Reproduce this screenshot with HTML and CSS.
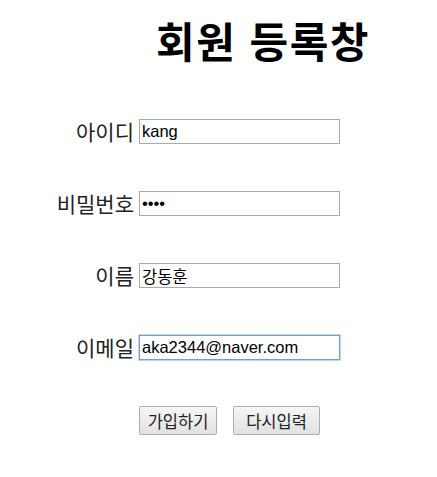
FILE: index.html
```html
<!DOCTYPE html>
<html lang="ko">
<head>
<meta charset="utf-8">
<title>회원 등록창</title>
<link rel="stylesheet" href="styles.css">
</head>
<body>
<h1 class="title">회원 등록창</h1>
<form class="form">
  <label class="label" for="uid">아이디</label>
  <input class="field" id="uid" type="text" value="kang">
  <label class="label" for="pw">비밀번호</label>
  <input class="field" id="pw" type="password" value="1234">
  <label class="label" for="name">이름</label>
  <input class="field" id="name" type="text" value="강동훈">
  <label class="label" for="mail">이메일</label>
  <input class="field focused" id="mail" type="text" value="aka2344@naver.com" autofocus>
  <div class="actions">
    <button class="btn" type="submit">가입하기</button>
    <button class="btn btn-wide" type="reset">다시입력</button>
  </div>
</form>
</body>
</html>
```
FILE: styles.css
```css
html, body {
  margin: 0;
  padding: 0;
  background: #ffffff;
}
body {
  font-family: "Noto Sans CJK KR", "Liberation Sans", sans-serif;
  color: #111;
  width: 437px;
  height: 477px;
  overflow: hidden;
}
.title {
  margin: 0;
  padding: 14px 0 0 156px;
  font-size: 42px;
  line-height: 52px;
  letter-spacing: 1.5px;
  font-weight: 700;
  color: #000;
  white-space: nowrap;
}
.form {
  display: grid;
  grid-template-columns: 134px 201px;
  column-gap: 5px;
  row-gap: 47px;
  margin-top: 53px;
  align-items: center;
}
.label {
  justify-self: end;
  font-size: 21px;
  line-height: 25px;
  color: #222;
  white-space: nowrap;
}
.field {
  box-sizing: border-box;
  width: 201px;
  height: 25px;
  margin: 0;
  padding: 1px 2px;
  border: 1px solid #a9a9a9;
  border-radius: 0;
  font-family: "Liberation Sans", "Noto Sans CJK KR", sans-serif;
  font-size: 16.5px;
  color: #000;
  background: #fff;
  outline: none;
}
.field.focused {
  border-color: #6f9fdb;
  box-shadow: 0 0 0 1px rgba(111, 159, 219, 0.45);
  caret-color: #000;
}
.actions {
  grid-column: 2;
  display: flex;
  gap: 16px;
  margin-top: -1px;
}
.btn {
  box-sizing: border-box;
  height: 29px;
  width: 78px;
  padding: 0;
  border: 1px solid #adadad;
  border-radius: 2px;
  background: linear-gradient(#f6f6f6, #e1e1e1);
  font-family: "Noto Sans CJK KR", sans-serif;
  font-size: 16.5px;
  color: #222;
}
.btn-wide {
  width: 87px;
}
```
